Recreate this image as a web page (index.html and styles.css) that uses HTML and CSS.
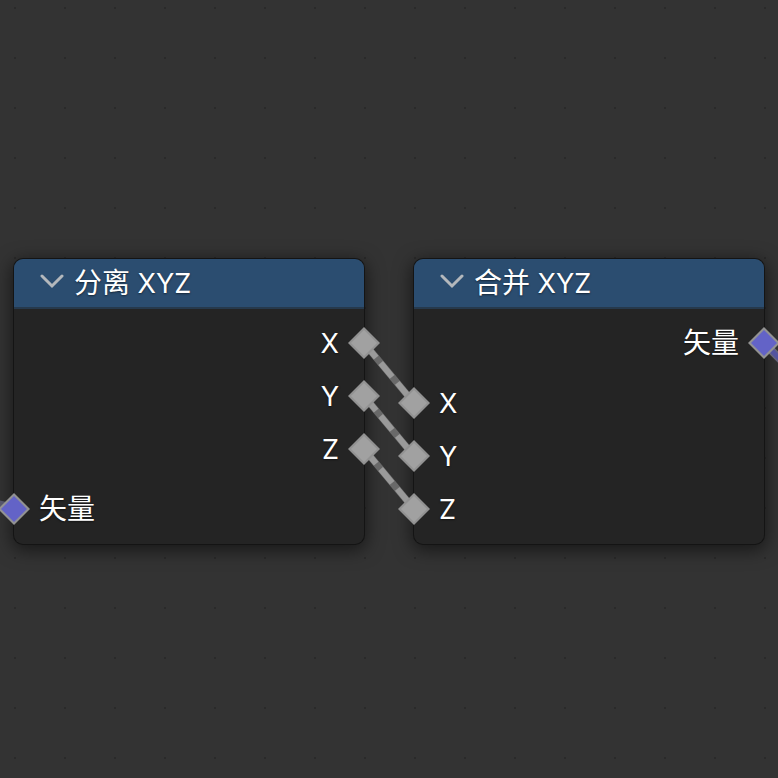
FILE: index.html
```
<!DOCTYPE html>
<html lang="zh-CN">
<head>
<meta charset="utf-8">
<title>分离 XYZ / 合并 XYZ</title>
<link rel="stylesheet" href="styles.css">
</head>
<body>
<main class="canvas">
  <article class="node node-separate">
    <header class="node-header">
      <button class="collapse" type="button" aria-label="折叠">
        <svg viewBox="0 0 24 18" width="24" height="18"><path d="M2 3 L12 13 L22 3"/></svg>
      </button>
      <h2 class="node-title"><span class="han">分离</span> XYZ</h2>
    </header>
    <div class="node-body">
      <ul class="sockets outputs">
        <li>X</li>
        <li>Y</li>
        <li>Z</li>
      </ul>
      <ul class="sockets inputs">
        <li class="han">矢量</li>
      </ul>
    </div>
  </article>
  <article class="node node-combine">
    <header class="node-header">
      <button class="collapse" type="button" aria-label="折叠">
        <svg viewBox="0 0 24 18" width="24" height="18"><path d="M2 3 L12 13 L22 3"/></svg>
      </button>
      <h2 class="node-title"><span class="han">合并</span> XYZ</h2>
    </header>
    <div class="node-body">
      <ul class="sockets outputs">
        <li class="han">矢量</li>
      </ul>
      <ul class="sockets inputs">
        <li>X</li>
        <li>Y</li>
        <li>Z</li>
      </ul>
    </div>
  </article>
  <svg class="links" aria-hidden="true">
    <defs>
      <g id="diamond"><path d="M0 -16 L16 0 L0 16 L-16 0 Z" fill="#929292"/><path d="M0 -13 L13 0 L0 13 L-13 0 Z"/></g>
      <g id="link">
        <path d="M0 0 L50 60" stroke="#696969" stroke-width="7"/>
        <path d="M0 0 L50 60" stroke="#9a9a9a" stroke-width="6" stroke-dasharray="19 7 18 8 40 1"/>
      </g>
    </defs>
    <use href="#link" x="364" y="343"/>
    <use href="#link" x="364" y="396"/>
    <use href="#link" x="364" y="449"/>
    <path d="M764 343 L814 393" stroke="#66667c" stroke-width="8"/>
    <path d="M764 343 L814 393" stroke="#53539f" stroke-width="5"/>
    <path d="M-36 495 L14 507" stroke="#55556a" stroke-width="6"/>
    <g fill="#a1a1a1">
      <use href="#diamond" x="364" y="343"/>
      <use href="#diamond" x="364" y="396"/>
      <use href="#diamond" x="364" y="449"/>
      <use href="#diamond" x="414" y="403"/>
      <use href="#diamond" x="414" y="456"/>
      <use href="#diamond" x="414" y="509"/>
    </g>
    <g fill="#6363c7">
      <use href="#diamond" x="14" y="509"/>
      <use href="#diamond" x="764" y="343"/>
    </g>
  </svg>
</main>
</body>
</html>
```
FILE: styles.css
```
* {
  box-sizing: border-box;
}

body {
  margin: 0;
  background: #333333;
  color: #ffffff;
  font-family: Inter, "Noto Sans CJK SC", sans-serif;
  font-size: 27px;
}

.canvas {
  position: relative;
  min-height: 100vh;
  overflow: hidden;
  background-image: conic-gradient(from 270deg at 2px 2px, #2a2a2a 90deg, transparent 0);
  background-position: 14px 7px;
  background-size: 50px 50px;
}

.node {
  position: absolute;
  top: 259px;
  width: 350px;
  border-radius: 9px;
  background: #242424;
  box-shadow: 0 0 0 1px #141414, 0 4px 18px 2px rgba(0, 0, 0, 0.55);
}

.node-separate {
  left: 14px;
}

.node-combine {
  left: 414px;
}

.node-header {
  display: flex;
  align-items: center;
  gap: 10px;
  height: 50px;
  padding-left: 26px;
  border-bottom: 2px solid #26394c;
  border-radius: 9px 9px 0 0;
  background: #2b4d70;
}

.collapse {
  display: flex;
  padding: 0 0 2px;
  border: 0;
  background: none;
}

.collapse path {
  fill: none;
  stroke: #b4b8bc;
  stroke-width: 3;
  stroke-linecap: round;
}

.node-title {
  margin: 0;
  font-size: 27px;
  font-weight: 400;
  line-height: 50px;
  text-shadow: 0 1px 2px rgba(0, 0, 0, 0.5);
}

.han {
  font-size: 28px;
}

.node-body {
  display: flex;
  flex-direction: column;
  gap: 7px;
  padding: 8px 25px;
}

.sockets {
  margin: 0;
  padding: 0;
  list-style: none;
  line-height: 53px;
  text-shadow: 0 1px 2px rgba(0, 0, 0, 0.5);
}

.sockets li {
  height: 53px;
}

.outputs {
  text-align: right;
}

.links {
  position: absolute;
  inset: 0;
  width: 100%;
  height: 100%;
  pointer-events: none;
}
```
